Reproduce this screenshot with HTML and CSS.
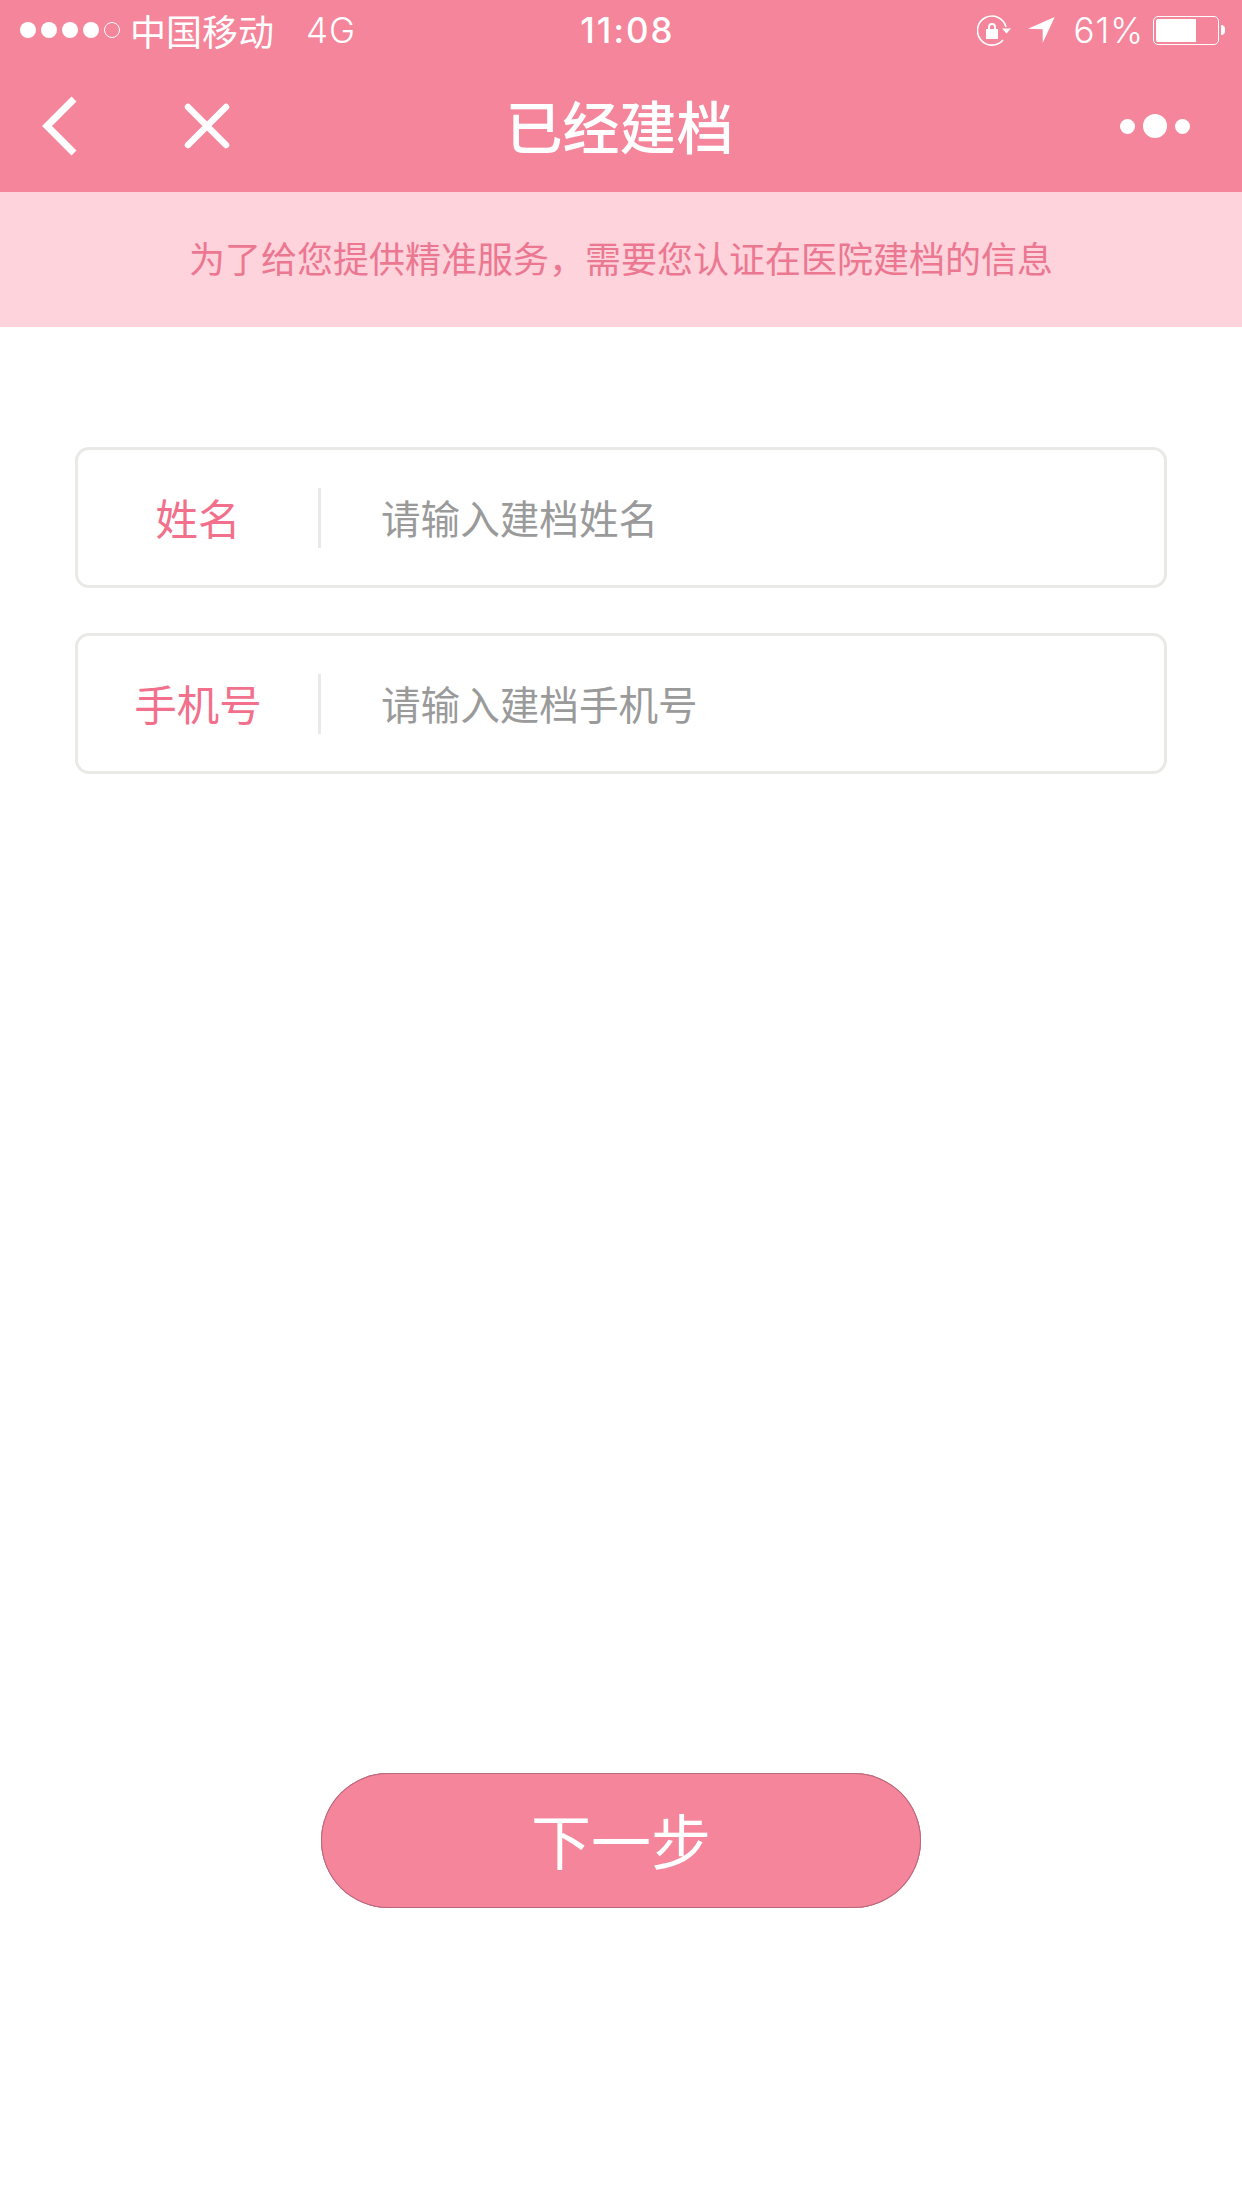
FILE: index.html
```html
<!DOCTYPE html>
<html lang="zh-CN">
<head>
<meta charset="utf-8">
<title>已经建档</title>
<link rel="stylesheet" href="styles.css">
</head>
<body>
<div class="page">
  <header class="top">
    <div class="status">
      <div class="status-left">
        <span class="signal"><i class="dot"></i><i class="dot"></i><i class="dot"></i><i class="dot"></i><i class="dot off"></i></span>
        <span class="carrier">中国移动</span>
        <span class="net">4G</span>
      </div>
      <div class="time">11:08</div>
      <div class="status-right">
        <svg class="ico-lock" width="35" height="31" viewBox="0 0 35 31">
          <path d="M26 25A14.500 14.500 0 1 1 29 12" fill="none" stroke="#fff" stroke-width="1.600"/>
          <path d="M25 13.500h9l-4.500 5z" fill="#fff"/>
          <path d="M11 14v-2a4 4 0 0 1 8 0v2h2v10H9V14zM13 14h4v-2a2 2 0 0 0-4 0z" fill="#fff" fill-rule="evenodd"/>
        </svg>
        <svg class="ico-loc" width="27" height="26" viewBox="0 0 27 26"><path d="M26.700 0L0 11.700l14.700.6V26z" fill="#fff"/></svg>
        <span class="pct">61%</span>
        <span class="battery"><span class="battery-fill"></span></span>
        <span class="nub"></span>
      </div>
    </div>
    <nav class="nav">
      <div class="nav-left">
        <svg class="ico-back" width="36" height="60" viewBox="0 0 36 60"><path d="M33 3L6 30l27 27" fill="none" stroke="#fff" stroke-width="7"/></svg>
        <svg class="ico-close" width="46" height="46" viewBox="0 0 46 46"><path d="M4 4l38 38M42 4L4 42" fill="none" stroke="#fff" stroke-width="6.500" stroke-linecap="round"/></svg>
      </div>
      <h1 class="title">已经建档</h1>
      <div class="nav-right">
        <i class="more small"></i><i class="more big"></i><i class="more small"></i>
      </div>
    </nav>
  </header>
  <p class="notice">为了给您提供精准服务，需要您认证在医院建档的信息</p>
  <main class="content">
    <form class="form">
      <label class="field">
        <span class="field-label">姓名</span>
        <span class="field-input">请输入建档姓名</span>
      </label>
      <label class="field">
        <span class="field-label">手机号</span>
        <span class="field-input">请输入建档手机号</span>
      </label>
    </form>
    <button class="next" type="button">下一步</button>
  </main>
</div>
</body>
</html>
```
FILE: styles.css
```css
* { box-sizing: border-box; }
html, body { margin: 0; padding: 0; background: #fff; }
body { font-family: "Noto Sans CJK SC", "Inter", sans-serif; }
.page { width: 1242px; height: 2208px; display: flex; flex-direction: column; overflow: hidden; }

.top { background: #f5859a; color: #fff; height: 192px; }
.status { height: 60px; display: grid; grid-template-columns: 1fr auto 1fr; align-items: center; padding: 0 17px 0 20px; }
.status-left, .status-right { display: flex; align-items: center; }
.status-right { justify-content: flex-end; }
.signal { display: flex; gap: 5px; }
.dot { width: 16px; height: 16px; border-radius: 50%; background: #fff; }
.dot.off { background: none; border: 1px solid #fff; }
.carrier { font-size: 36px; font-weight: 400; line-height: 60px; margin-left: 10px; }
.net { font-family: "Inter", sans-serif; font-size: 35px; font-weight: 300; letter-spacing: 1px; margin-left: 32px; }
.time { font-family: "Inter", sans-serif; font-size: 35px; font-weight: 500; letter-spacing: 2px; margin-left: 10px; }
.pct { font-family: "Inter", sans-serif; font-size: 35px; font-weight: 300; letter-spacing: 1px; margin-left: 18px; }
.ico-lock { margin-right: 16px; }
.battery { width: 66px; height: 29px; border: 1.500px solid #fff; border-radius: 5px; margin-left: 9px; padding: 2px; display: flex; }
.battery-fill { width: 40px; background: #fff; border-radius: 2px 0 0 2px; }
.nub { width: 4px; height: 10px; background: #fff; border-radius: 0 4px 4px 0; margin-left: 2px; }

.nav { height: 132px; display: grid; grid-template-columns: 1fr auto 1fr; align-items: center; padding: 0 52px 0 41px; }
.nav-left { display: flex; align-items: center; gap: 107px; }
.nav-right { display: flex; align-items: center; justify-content: flex-end; gap: 8px; }
.title { margin: -4px 0 0 8px; font-size: 57px; font-weight: 500; line-height: 1; }
.more { border-radius: 50%; background: #fff; display: block; }
.more.small { width: 15px; height: 15px; }
.more.big { width: 24px; height: 24px; }

.notice { margin: 0; height: 135px; background: #fed3dc; color: #ec7790; font-size: 36px; font-weight: 400; line-height: 131px; text-align: center; }

.content { flex: 1; display: flex; flex-direction: column; align-items: center; padding-top: 120px; }
.form { display: flex; flex-direction: column; gap: 45px; }
.field { width: 1092px; height: 141px; border: 3px solid #e9e9e5; border-radius: 14px; display: flex; align-items: center; }
.field-label { width: 243px; height: 60px; border-right: 3px solid #e9e9e5; color: #f2708c; font-size: 42.500px; font-weight: 400; line-height: 57px; text-align: center; flex: none; }
.field-input { margin-left: 60px; padding-bottom: 3px; color: #9a9a9a; font-size: 39.600px; font-weight: 400; }

.next { margin-top: 999px; width: 600px; height: 135px; border: none; border-radius: 67.500px; background: #f5859a; color: #fff; font-family: inherit; font-size: 60px; font-weight: 400; padding: 0 0 4px; box-shadow: inset 0 1px 0 #b8687c, inset 0 -1px 0 #b8687c, inset 1px 0 0 #b8687c, inset -1px 0 0 #b8687c; }
```
